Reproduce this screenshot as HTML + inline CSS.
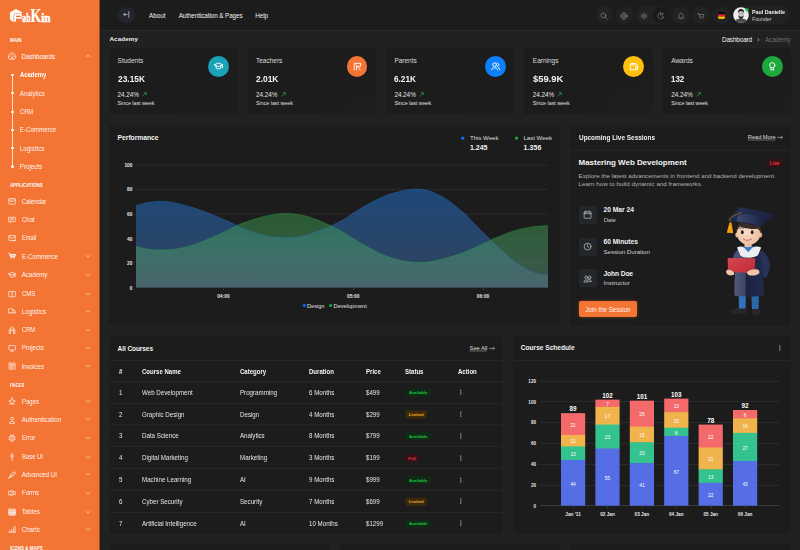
<!DOCTYPE html>
<html><head><meta charset="utf-8"><title>FabKin</title>
<style>
html,body{margin:0;padding:0;}
html{background:#212121;overflow:hidden;width:800px;height:550px;}
body{width:800px;height:550px;overflow:hidden;background:#212121;font-family:"Liberation Sans",sans-serif;position:relative;}
.t{position:absolute;white-space:nowrap;margin:0;padding:0;}
.b{position:absolute;box-sizing:border-box;}
svg{position:absolute;overflow:visible;}
.u{text-decoration:underline;text-decoration-thickness:0.5px;text-underline-offset:1px;}
</style></head><body>
<svg style="left:0;top:0" width="800" height="550" viewBox="0 0 800 550"><rect x="109.20" y="48.00" width="128.30" height="66.60" rx="3" fill="#1c1c1c"/><rect x="247.60" y="48.00" width="128.30" height="66.60" rx="3" fill="#1c1c1c"/><rect x="386.00" y="48.00" width="128.30" height="66.60" rx="3" fill="#1c1c1c"/><rect x="524.40" y="48.00" width="128.30" height="66.60" rx="3" fill="#1c1c1c"/><rect x="662.80" y="48.00" width="128.30" height="66.60" rx="3" fill="#1c1c1c"/><rect x="109.20" y="125.00" width="450.80" height="199.60" rx="3" fill="#1c1c1c"/><rect x="570.20" y="125.00" width="220.60" height="200.60" rx="3" fill="#1c1c1c"/><rect x="109.20" y="336.00" width="392.90" height="197.40" rx="3" fill="#1c1c1c"/><rect x="405.50" y="388.70" width="25.40" height="8.00" rx="1.8" fill="#0f2b15"/><rect x="405.50" y="410.53" width="21.40" height="8.00" rx="1.8" fill="#3a2a0c"/><rect x="405.50" y="432.36" width="25.40" height="8.00" rx="1.8" fill="#0f2b15"/><rect x="405.50" y="454.19" width="13.20" height="8.00" rx="1.8" fill="#3a1216"/><rect x="405.50" y="476.02" width="25.40" height="8.00" rx="1.8" fill="#0f2b15"/><rect x="405.50" y="497.85" width="21.40" height="8.00" rx="1.8" fill="#3a2a0c"/><rect x="405.50" y="519.68" width="25.40" height="8.00" rx="1.8" fill="#0f2b15"/><rect x="513.00" y="336.00" width="277.80" height="197.20" rx="3" fill="#1c1c1c"/><rect x="109.20" y="544.00" width="220.50" height="10.00" rx="3" fill="#1c1c1c"/><rect x="339.80" y="544.00" width="220.50" height="10.00" rx="3" fill="#1c1c1c"/><rect x="570.30" y="544.00" width="220.50" height="10.00" rx="3" fill="#1c1c1c"/></svg>
<div class="b" style="left:99.00px;top:0.00px;width:701.00px;height:31.00px;background:#1c1c1c;border-radius:0px;border-bottom:1px solid #292929;"></div>
<svg style="left:0;top:0" width="102" height="550" viewBox="0 0 102 550"><rect x="99" y="0" width="2.1" height="550" fill="#1c1e20"/><rect x="0" y="0" width="99.55" height="550" fill="#f37433"/></svg>
<svg style="left:0;top:0" width="60" height="30" viewBox="0 0 60 30">
<path d="M9.95 12.6 L16 9.0 L21.8 11.9 L21.8 21.6 L12.8 21.7 L9.95 19.5 Z" fill="#fff"/>
<path d="M21.9 13.4 L15.6 13.4 Q13.8 13.4 13.8 15.2 L13.8 21.8" fill="none" stroke="#f37433" stroke-width="0.55"/>
<rect x="16" y="15.7" width="4.6" height="1.4" fill="#f37433"/>
<path d="M16 18.7 L21.9 18.7 L21.9 21.8 L16 21.8 Z" fill="#f37433"/>
<g fill="#fff" font-family="Liberation Serif, serif" font-weight="700">
<text transform="translate(22.3,21.7) scale(1,1.4)" font-size="9" stroke="#fff" stroke-width="0.4" textLength="8.2" lengthAdjust="spacingAndGlyphs">ab</text>
<text transform="translate(30.4,21.7) scale(1,1.37)" font-size="13" stroke="#fff" stroke-width="0.15" textLength="10.8" lengthAdjust="spacingAndGlyphs">K</text>
<text transform="translate(41.2,21.7) scale(1,1.4)" font-size="9" stroke="#fff" stroke-width="0.4" textLength="9.3" lengthAdjust="spacingAndGlyphs">in</text>
</g></svg>
<span class="t " style="left:9.90px;top:37px;font-size:4.5px;line-height:7px;color:#fff;font-weight:700;letter-spacing:0.050px;">MAIN</span>
<span class="t " style="left:9.90px;top:182px;font-size:4.5px;line-height:7px;color:#fff;font-weight:700;letter-spacing:-0.031px;">APPLICATIONS</span>
<span class="t " style="left:9.90px;top:382px;font-size:4.5px;line-height:7px;color:#fff;font-weight:700;transform-origin:0 50%;transform:scaleX(0.9273);">PAGES</span>
<span class="t " style="left:9.90px;top:545px;font-size:4.5px;line-height:7px;color:#fff;font-weight:700;letter-spacing:-0.017px;">ICONS &amp; MAPS</span>
<svg style="left:7.6px;top:52.20px" width="8.2" height="8.2" viewBox="0 0 8 8" fill="none" stroke="#fff" stroke-width="0.66" stroke-linecap="round" stroke-linejoin="round" opacity="0.95"><path d="M0.5 5.2 C0.4 2.6 2 0.9 4 0.9 C6 0.9 7.6 2.6 7.5 5.2 C7.5 6.4 6.8 7 5.8 7 H2.2 C1.2 7 0.5 6.4 0.5 5.2 Z M2.6 7 C2.6 5.4 5.4 5.4 5.4 7 M4 5.6 L5.2 3.4 M1.9 4.6 h0.1 M2.6 3 h0.1 M4 2.3 h0.1 M6.1 4.6 h0.1"/></svg>
<span class="t " style="left:21.60px;top:52px;font-size:6.3px;line-height:9px;color:#fff;letter-spacing:-0.057px;">Dashboards</span>
<svg style="left:85.8px;top:55.4px" width="4" height="2.4" viewBox="0 0 4 2.4"><path d="M0 2.2 L2 0.2 L4 2.2" fill="none" stroke="#fff" stroke-width="0.7" opacity="0.85"/></svg>
<div class="b" style="left:12.30px;top:75.00px;width:0.50px;height:91.50px;background:rgba(255,255,255,.75);border-radius:0px;"></div>
<div class="b" style="left:11.45px;top:74.10px;width:2.20px;height:2.20px;background:#fff;border-radius:2px;"></div>
<span class="t " style="left:19.80px;top:70px;font-size:6.3px;line-height:9px;color:#fff;font-weight:700;transform-origin:0 50%;transform:scaleX(0.9352);">Academy</span>
<div class="b" style="left:11.45px;top:92.30px;width:2.20px;height:2.20px;background:#fff;border-radius:2px;"></div>
<span class="t " style="left:19.80px;top:89px;font-size:6.3px;line-height:9px;color:rgba(255,255,255,.95);letter-spacing:-0.001px;">Analytics</span>
<div class="b" style="left:11.45px;top:110.50px;width:2.20px;height:2.20px;background:#fff;border-radius:2px;"></div>
<span class="t " style="left:19.80px;top:107px;font-size:6.3px;line-height:9px;color:rgba(255,255,255,.95);transform-origin:0 50%;transform:scaleX(0.9200);">CRM</span>
<div class="b" style="left:11.45px;top:128.80px;width:2.20px;height:2.20px;background:#fff;border-radius:2px;"></div>
<span class="t " style="left:19.80px;top:125px;font-size:6.3px;line-height:9px;color:rgba(255,255,255,.95);letter-spacing:-0.071px;">E-Commerce</span>
<div class="b" style="left:11.45px;top:147.20px;width:2.20px;height:2.20px;background:#fff;border-radius:2px;"></div>
<span class="t " style="left:19.80px;top:144px;font-size:6.3px;line-height:9px;color:rgba(255,255,255,.95);letter-spacing:0.021px;">Logistics</span>
<div class="b" style="left:11.45px;top:165.40px;width:2.20px;height:2.20px;background:#fff;border-radius:2px;"></div>
<span class="t " style="left:19.80px;top:162px;font-size:6.3px;line-height:9px;color:rgba(255,255,255,.95);letter-spacing:-0.070px;">Projects</span>
<svg style="left:7.6px;top:197.30px" width="8.2" height="8.2" viewBox="0 0 8 8" fill="none" stroke="#fff" stroke-width="0.66" stroke-linecap="round" stroke-linejoin="round" opacity="0.95"><rect x="0.8" y="1.4" width="6.4" height="5.6" rx="0.8"/><path d="M0.8 3 H7.2 M2.4 4.4 H4.2"/></svg>
<span class="t " style="left:21.70px;top:197px;font-size:6.3px;line-height:9px;color:rgba(255,255,255,.95);letter-spacing:-0.121px;">Calendar</span>
<svg style="left:7.6px;top:215.50px" width="8.2" height="8.2" viewBox="0 0 8 8" fill="none" stroke="#fff" stroke-width="0.66" stroke-linecap="round" stroke-linejoin="round" opacity="0.95"><path d="M0.9 1.2 H7.1 V5.4 H3.6 L2.2 6.9 V5.4 H0.9 Z M2.3 2.7 H5.7 M2.3 3.9 H4.6"/></svg>
<span class="t " style="left:21.70px;top:215px;font-size:6.3px;line-height:9px;color:rgba(255,255,255,.95);transform-origin:0 50%;transform:scaleX(0.9543);">Chat</span>
<svg style="left:7.6px;top:234.00px" width="8.2" height="8.2" viewBox="0 0 8 8" fill="none" stroke="#fff" stroke-width="0.66" stroke-linecap="round" stroke-linejoin="round" opacity="0.95"><rect x="0.8" y="1.6" width="6.4" height="4.8" rx="0.6"/><path d="M0.8 2.2 L4 4.4 L7.2 2.2 M5 6.4 L7.4 6.4"/></svg>
<span class="t " style="left:21.70px;top:233px;font-size:6.3px;line-height:9px;color:rgba(255,255,255,.95);transform-origin:0 50%;transform:scaleX(0.9014);">Email</span>
<svg style="left:7.6px;top:252.30px" width="8.2" height="8.2" viewBox="0 0 8 8" fill="none" stroke="#fff" stroke-width="0.66" stroke-linecap="round" stroke-linejoin="round" opacity="0.95"><path d="M2.2 2.4 H7.2 L6.4 5 H2.8 Z" fill="rgba(255,255,255,.55)"/><path d="M0.6 1.2 H1.8 L2.8 5 H6.4 L7.2 2.4 H2.2 M3.2 6.6 h0.1 M6 6.6 h0.1" stroke-width="0.75"/></svg>
<span class="t " style="left:21.70px;top:252px;font-size:6.3px;line-height:9px;color:rgba(255,255,255,.95);letter-spacing:-0.081px;">E-Commerce</span>
<svg style="left:85.8px;top:255.2px" width="4" height="2.4" viewBox="0 0 4 2.4"><path d="M0 0.2 L2 2.2 L4 0.2" fill="none" stroke="#fff" stroke-width="0.7" opacity="0.8"/></svg>
<svg style="left:7.6px;top:270.60px" width="8.2" height="8.2" viewBox="0 0 8 8" fill="none" stroke="#fff" stroke-width="0.66" stroke-linecap="round" stroke-linejoin="round" opacity="0.95"><path d="M0.6 2.6 L4 1.2 L7.4 2.6 L4 4 Z M2 3.4 V5.4 C3 6.4 5 6.4 6 5.4 V3.4 M7 2.8 V5.6"/></svg>
<span class="t " style="left:21.70px;top:270px;font-size:6.3px;line-height:9px;color:rgba(255,255,255,.95);letter-spacing:-0.095px;">Academy</span>
<svg style="left:85.8px;top:273.5px" width="4" height="2.4" viewBox="0 0 4 2.4"><path d="M0 0.2 L2 2.2 L4 0.2" fill="none" stroke="#fff" stroke-width="0.7" opacity="0.8"/></svg>
<svg style="left:7.6px;top:289.60px" width="8.2" height="8.2" viewBox="0 0 8 8" fill="none" stroke="#fff" stroke-width="0.66" stroke-linecap="round" stroke-linejoin="round" opacity="0.95"><rect x="0.8" y="1.4" width="6.4" height="5.2" rx="0.4"/><path d="M4 1.4 V6.6"/></svg>
<span class="t " style="left:21.70px;top:289px;font-size:6.3px;line-height:9px;color:rgba(255,255,255,.95);transform-origin:0 50%;transform:scaleX(0.9428);">CMS</span>
<svg style="left:85.8px;top:292.5px" width="4" height="2.4" viewBox="0 0 4 2.4"><path d="M0 0.2 L2 2.2 L4 0.2" fill="none" stroke="#fff" stroke-width="0.7" opacity="0.8"/></svg>
<svg style="left:7.6px;top:307.30px" width="8.2" height="8.2" viewBox="0 0 8 8" fill="none" stroke="#fff" stroke-width="0.66" stroke-linecap="round" stroke-linejoin="round" opacity="0.95"><path d="M0.8 1.8 H4.8 V5.6 H0.8 Z M4.8 3 H6.4 L7.3 4.2 V5.6 H4.8 M2.2 6.3 h0.1 M6 6.3 h0.1"/></svg>
<span class="t " style="left:21.70px;top:307px;font-size:6.3px;line-height:9px;color:rgba(255,255,255,.95);letter-spacing:0.010px;">Logistics</span>
<svg style="left:85.8px;top:310.2px" width="4" height="2.4" viewBox="0 0 4 2.4"><path d="M0 0.2 L2 2.2 L4 0.2" fill="none" stroke="#fff" stroke-width="0.7" opacity="0.8"/></svg>
<svg style="left:7.6px;top:325.60px" width="8.2" height="8.2" viewBox="0 0 8 8" fill="none" stroke="#fff" stroke-width="0.66" stroke-linecap="round" stroke-linejoin="round" opacity="0.95"><path d="M1.2 7 V3.4 L2.6 2.2 L2.6 7 Z M5.4 7 V2.2 L6.8 3.4 V7 Z M2.6 4.2 H5.4 M3.2 1 V2 M4.8 1 V2"/></svg>
<span class="t " style="left:21.70px;top:325px;font-size:6.3px;line-height:9px;color:rgba(255,255,255,.95);transform-origin:0 50%;transform:scaleX(0.9200);">CRM</span>
<svg style="left:85.8px;top:328.5px" width="4" height="2.4" viewBox="0 0 4 2.4"><path d="M0 0.2 L2 2.2 L4 0.2" fill="none" stroke="#fff" stroke-width="0.7" opacity="0.8"/></svg>
<svg style="left:7.6px;top:343.90px" width="8.2" height="8.2" viewBox="0 0 8 8" fill="none" stroke="#fff" stroke-width="0.66" stroke-linecap="round" stroke-linejoin="round" opacity="0.95"><rect x="0.8" y="1.4" width="6.4" height="4.4" rx="0.5"/><path d="M2.8 7 H5.2 M4 5.8 V7"/></svg>
<span class="t " style="left:21.70px;top:343px;font-size:6.3px;line-height:9px;color:rgba(255,255,255,.95);letter-spacing:-0.082px;">Projects</span>
<svg style="left:85.8px;top:346.8px" width="4" height="2.4" viewBox="0 0 4 2.4"><path d="M0 0.2 L2 2.2 L4 0.2" fill="none" stroke="#fff" stroke-width="0.7" opacity="0.8"/></svg>
<svg style="left:7.6px;top:362.20px" width="8.2" height="8.2" viewBox="0 0 8 8" fill="none" stroke="#fff" stroke-width="0.66" stroke-linecap="round" stroke-linejoin="round" opacity="0.95"><rect x="1" y="1" width="6" height="6" rx="0.3"/><path d="M2.2 2.4 H5.8 M2.2 3.6 H5.8 M2.2 4.8 H5.8 M2.2 5.9 H4"/></svg>
<span class="t " style="left:21.70px;top:362px;font-size:6.3px;line-height:9px;color:rgba(255,255,255,.95);letter-spacing:-0.101px;">Invoices</span>
<svg style="left:85.8px;top:365.1px" width="4" height="2.4" viewBox="0 0 4 2.4"><path d="M0 0.2 L2 2.2 L4 0.2" fill="none" stroke="#fff" stroke-width="0.7" opacity="0.8"/></svg>
<svg style="left:7.6px;top:397.20px" width="8.2" height="8.2" viewBox="0 0 8 8" fill="none" stroke="#fff" stroke-width="0.66" stroke-linecap="round" stroke-linejoin="round" opacity="0.95"><path d="M4 0.8 L5.2 3.4 L7.2 4 L5.2 4.8 L4 7.2 L2.8 4.8 L0.8 4 L2.8 3.4 Z M1.4 6.8 H6.6"/></svg>
<span class="t " style="left:21.70px;top:397px;font-size:6.3px;line-height:9px;color:rgba(255,255,255,.95);transform-origin:0 50%;transform:scaleX(0.9516);">Pages</span>
<svg style="left:85.8px;top:400.1px" width="4" height="2.4" viewBox="0 0 4 2.4"><path d="M0 0.2 L2 2.2 L4 0.2" fill="none" stroke="#fff" stroke-width="0.7" opacity="0.8"/></svg>
<svg style="left:7.6px;top:415.50px" width="8.2" height="8.2" viewBox="0 0 8 8" fill="none" stroke="#fff" stroke-width="0.66" stroke-linecap="round" stroke-linejoin="round" opacity="0.95"><circle cx="4" cy="2.6" r="1.4"/><path d="M1.4 6.8 C1.4 4.6 6.6 4.6 6.6 6.8 Z"/></svg>
<span class="t " style="left:21.70px;top:415px;font-size:6.3px;line-height:9px;color:rgba(255,255,255,.95);letter-spacing:-0.024px;">Authentication</span>
<svg style="left:85.8px;top:418.40000000000003px" width="4" height="2.4" viewBox="0 0 4 2.4"><path d="M0 0.2 L2 2.2 L4 0.2" fill="none" stroke="#fff" stroke-width="0.7" opacity="0.8"/></svg>
<svg style="left:7.6px;top:433.70px" width="8.2" height="8.2" viewBox="0 0 8 8" fill="none" stroke="#fff" stroke-width="0.66" stroke-linecap="round" stroke-linejoin="round" opacity="0.95"><rect x="2" y="1.6" width="4" height="5.2" rx="1.4"/><path d="M0.9 3 H2 M6 3 H7.1 M0.9 5.2 H2 M6 5.2 H7.1 M4 1.6 V6.8 M2.8 0.8 L3.3 1.6 M5.2 0.8 L4.7 1.6"/></svg>
<span class="t " style="left:21.70px;top:433px;font-size:6.3px;line-height:9px;color:rgba(255,255,255,.95);transform-origin:0 50%;transform:scaleX(0.9428);">Error</span>
<svg style="left:85.8px;top:436.6px" width="4" height="2.4" viewBox="0 0 4 2.4"><path d="M0 0.2 L2 2.2 L4 0.2" fill="none" stroke="#fff" stroke-width="0.7" opacity="0.8"/></svg>
<svg style="left:7.6px;top:452.60px" width="8.2" height="8.2" viewBox="0 0 8 8" fill="none" stroke="#fff" stroke-width="0.66" stroke-linecap="round" stroke-linejoin="round" opacity="0.95"><path d="M4 0.8 C5.6 2 5.6 4 4 5 C2.4 4 2.4 2 4 0.8 Z M4 2.4 V7.4"/></svg>
<span class="t " style="left:21.70px;top:452px;font-size:6.3px;line-height:9px;color:rgba(255,255,255,.95);transform-origin:0 50%;transform:scaleX(0.9371);">Base UI</span>
<svg style="left:85.8px;top:455.5px" width="4" height="2.4" viewBox="0 0 4 2.4"><path d="M0 0.2 L2 2.2 L4 0.2" fill="none" stroke="#fff" stroke-width="0.7" opacity="0.8"/></svg>
<svg style="left:7.6px;top:470.50px" width="8.2" height="8.2" viewBox="0 0 8 8" fill="none" stroke="#fff" stroke-width="0.66" stroke-linecap="round" stroke-linejoin="round" opacity="0.95"><path d="M0.8 7.2 C1.6 3.4 4.2 1.4 7.2 0.9 C6.8 3.8 4.8 6 1.8 6.2 M0.8 7.2 L4.6 3.4"/></svg>
<span class="t " style="left:21.70px;top:470px;font-size:6.3px;line-height:9px;color:rgba(255,255,255,.95);letter-spacing:-0.070px;">Advanced UI</span>
<svg style="left:85.8px;top:473.40000000000003px" width="4" height="2.4" viewBox="0 0 4 2.4"><path d="M0 0.2 L2 2.2 L4 0.2" fill="none" stroke="#fff" stroke-width="0.7" opacity="0.8"/></svg>
<svg style="left:7.6px;top:488.80px" width="8.2" height="8.2" viewBox="0 0 8 8" fill="none" stroke="#fff" stroke-width="0.66" stroke-linecap="round" stroke-linejoin="round" opacity="0.95"><path d="M0.8 2.2 H3 V5.8 H0.8 Z M3 1.4 C4.4 1.4 5 1.8 5 2.6 V5.4 C5 6.2 4.4 6.6 3 6.6 M5 2.6 H7.2 V5.4 H5"/></svg>
<span class="t " style="left:21.70px;top:488px;font-size:6.3px;line-height:9px;color:rgba(255,255,255,.95);transform-origin:0 50%;transform:scaleX(0.9525);">Forms</span>
<svg style="left:85.8px;top:491.7px" width="4" height="2.4" viewBox="0 0 4 2.4"><path d="M0 0.2 L2 2.2 L4 0.2" fill="none" stroke="#fff" stroke-width="0.7" opacity="0.8"/></svg>
<svg style="left:7.6px;top:507.70px" width="8.2" height="8.2" viewBox="0 0 8 8" fill="none" stroke="#fff" stroke-width="0.66" stroke-linecap="round" stroke-linejoin="round" opacity="0.95"><rect x="0.8" y="1" width="6.4" height="6" rx="0.4" fill="rgba(255,255,255,.35)"/><path d="M0.8 2.8 H7.2 M0.8 4.4 H7.2 M0.8 5.8 H7.2 M3 2.8 V7 M5.2 2.8 V7"/></svg>
<span class="t " style="left:21.70px;top:507px;font-size:6.3px;line-height:9px;color:rgba(255,255,255,.95);letter-spacing:-0.002px;">Tables</span>
<svg style="left:85.8px;top:510.6px" width="4" height="2.4" viewBox="0 0 4 2.4"><path d="M0 0.2 L2 2.2 L4 0.2" fill="none" stroke="#fff" stroke-width="0.7" opacity="0.8"/></svg>
<svg style="left:7.6px;top:525.30px" width="8.2" height="8.2" viewBox="0 0 8 8" fill="none" stroke="#fff" stroke-width="0.66" stroke-linecap="round" stroke-linejoin="round" opacity="0.95"><path d="M1 7 H7.2 M1.8 7 V5.4 M3.6 7 V4.2 M5.4 7 V2.6 M7 7 V1.2"/></svg>
<span class="t " style="left:21.70px;top:525px;font-size:6.3px;line-height:9px;color:rgba(255,255,255,.95);letter-spacing:-0.059px;">Charts</span>
<svg style="left:85.8px;top:528.1999999999999px" width="4" height="2.4" viewBox="0 0 4 2.4"><path d="M0 0.2 L2 2.2 L4 0.2" fill="none" stroke="#fff" stroke-width="0.7" opacity="0.8"/></svg>
<div class="b" style="left:118.30px;top:6.80px;width:16.40px;height:16.40px;background:#23272d;border-radius:9px;"></div>
<svg style="left:123px;top:11.4px" width="7" height="7" viewBox="0 0 7 7" fill="none" stroke="#d4d9e2" stroke-width="0.7"><path d="M0.7 3.5 H4.4 M2.2 2 L0.7 3.5 L2.2 5 M5.8 0.2 V6.8"/></svg>
<span class="t " style="left:149.00px;top:11px;font-size:6.3px;line-height:9px;color:#f2f2f2;letter-spacing:0.027px;">About</span>
<span class="t " style="left:178.70px;top:11px;font-size:6.3px;line-height:9px;color:#f2f2f2;letter-spacing:-0.073px;">Authentication &amp; Pages</span>
<span class="t " style="left:255.30px;top:11px;font-size:6.3px;line-height:9px;color:#f2f2f2;letter-spacing:-0.064px;">Help</span>
<div class="b" style="left:595.60px;top:6.20px;width:17.60px;height:17.60px;background:#222222;border-radius:9px;"></div>
<div class="b" style="left:615.60px;top:6.20px;width:17.60px;height:17.60px;background:#222222;border-radius:9px;"></div>
<div class="b" style="left:672.20px;top:6.20px;width:17.60px;height:17.60px;background:#222222;border-radius:9px;"></div>
<div class="b" style="left:692.20px;top:6.20px;width:17.60px;height:17.60px;background:#222222;border-radius:9px;"></div>
<div class="b" style="left:712.40px;top:6.20px;width:17.60px;height:17.60px;background:#222222;border-radius:9px;"></div>
<div class="b" style="left:635.50px;top:6.20px;width:34.70px;height:17.60px;background:#222222;border-radius:9px;"></div>
<div class="b" style="left:653.40px;top:7.00px;width:16.00px;height:16.00px;background:#1a1a1a;border-radius:9px;"></div>
<svg style="left:600.4px;top:11.5px" width="8" height="8" viewBox="0 0 8 8" fill="none" stroke="#9c9c9c" stroke-width="0.55" stroke-linecap="round" stroke-linejoin="round"><circle cx="3.4" cy="3.4" r="2.4"/><path d="M5.2 5.2 L7.2 7.2"/></svg>
<svg style="left:620.4px;top:11.5px" width="8" height="8" viewBox="0 0 8 8" fill="none" stroke="#9c9c9c" stroke-width="0.55" stroke-linecap="round" stroke-linejoin="round"><circle cx="4" cy="4" r="2.9"/><circle cx="4" cy="4" r="1.2"/><path d="M4 0.6 V1.4 M4 6.6 V7.4 M0.6 4 H1.4 M6.6 4 H7.4"/></svg>
<svg style="left:640.3px;top:11.5px" width="8" height="8" viewBox="0 0 8 8" fill="none" stroke="#9c9c9c" stroke-width="0.55" stroke-linecap="round" stroke-linejoin="round"><circle cx="4" cy="4" r="1.5"/><path d="M4 0.7 V1.5 M4 6.5 V7.3 M0.7 4 H1.5 M6.5 4 H7.3 M1.7 1.7 L2.2 2.2 M5.8 5.8 L6.3 6.3 M1.7 6.3 L2.2 5.8 M5.8 2.2 L6.3 1.7"/></svg>
<svg style="left:657.4px;top:11.5px" width="8" height="8" viewBox="0 0 8 8" fill="none" stroke="#9c9c9c" stroke-width="0.55" stroke-linecap="round" stroke-linejoin="round"><path d="M3.4 1 C1.6 1.4 0.8 3 1 4.4 C1.3 6.2 3 7.2 4.6 7 C5.8 6.8 6.6 6 7 5 C5.6 5.4 3.6 4.6 3.4 1 Z M5.6 1.2 V2.6 M4.9 1.9 H6.3"/></svg>
<svg style="left:677px;top:11.5px" width="8" height="8" viewBox="0 0 8 8" fill="none" stroke="#9c9c9c" stroke-width="0.55" stroke-linecap="round" stroke-linejoin="round"><path d="M1.6 5.8 C2.2 5 2 3.8 2.2 2.8 C2.4 1.8 3.2 1.1 4 1.1 C4.8 1.1 5.6 1.8 5.8 2.8 C6 3.8 5.8 5 6.4 5.8 Z M3.3 6.8 C3.6 7.3 4.4 7.3 4.7 6.8"/></svg>
<svg style="left:697px;top:11.5px" width="8" height="8" viewBox="0 0 8 8" fill="none" stroke="#9c9c9c" stroke-width="0.55" stroke-linecap="round" stroke-linejoin="round"><path d="M0.8 1.3 H1.9 L2.8 5.2 H6.2 L7 2.5 H2.2 M3.3 6.6 h0.1 M5.8 6.6 h0.1"/></svg>
<svg style="left:717.8px;top:12.3px" width="7" height="6.9" viewBox="0 0 7 6.9"><defs><clipPath id="fl"><rect width="7" height="6.9" rx="1.6"/></clipPath></defs><g clip-path="url(#fl)"><rect width="7" height="2.3" fill="#0c0c0c"/><rect y="2.3" width="7" height="2.3" fill="#e0202a"/><rect y="4.6" width="7" height="2.3" fill="#f9c500"/></g></svg>
<div class="b" style="left:732.60px;top:5.60px;width:57.20px;height:18.80px;background:#222222;border-radius:10px;"></div>
<svg style="left:733.4px;top:7px" width="16" height="16" viewBox="0 0 17 17">
<defs><clipPath id="av"><circle cx="8.5" cy="8.5" r="8.3"/></clipPath></defs>
<circle cx="8.5" cy="8.5" r="8.3" fill="#ececec"/>
<g clip-path="url(#av)">
<path d="M1.2 17 C1.8 13.6 4.6 12.6 8.5 12.6 C12.4 12.6 15.2 13.6 15.8 17 Z" fill="#4a4a4a"/>
<path d="M5.4 6.8 C5.4 4 6.6 3 8.5 3 C10.4 3 11.6 4 11.6 6.8 C11.6 10 10.4 12.6 8.5 12.6 C6.6 12.6 5.4 10 5.4 6.8 Z" fill="#c9c9c9"/>
<path d="M5.2 6.6 C4.8 3.4 6.4 2 8.5 2 C10.6 2 12.2 3.4 11.8 6.6 C11.2 5 10.4 4.6 8.5 4.6 C6.6 4.6 5.8 5 5.2 6.6 Z" fill="#222"/>
<path d="M5.5 8.4 C5.8 11.4 6.9 12.9 8.5 12.9 C10.1 12.9 11.2 11.4 11.5 8.4 C10.8 9.8 10 10 8.5 10 C7 10 6.2 9.8 5.5 8.4 Z" fill="#333"/>
<path d="M6.6 7 h1.2 M9.2 7 h1.2" stroke="#333" stroke-width="0.6"/>
</g>
<circle cx="14.9" cy="3" r="1.75" fill="#1fc244"/>
</svg>
<span class="t " style="left:752.00px;top:8px;font-size:5.9px;line-height:8px;color:#f2f2f2;font-weight:700;transform-origin:0 50%;transform:scaleX(0.8986);">Paul Danielle</span>
<span class="t " style="left:752.00px;top:15px;font-size:5.3px;line-height:8px;color:#c8c8c8;letter-spacing:-0.049px;">Founder</span>
<span class="t " style="left:109.40px;top:34px;font-size:6.2px;line-height:9px;color:#f0f0f0;font-weight:700;letter-spacing:0.176px;">Academy</span>
<span class="t " style="left:722.00px;top:35px;font-size:6.3px;line-height:9px;color:#f4f4f4;letter-spacing:-0.091px;">Dashboard</span>
<svg style="left:757px;top:38.4px" width="3" height="3.4" viewBox="0 0 3 3.4"><path d="M0.6 0.3 L2.2 1.7 L0.6 3.1" fill="none" stroke="#b0b0b0" stroke-width="0.75"/></svg>
<span class="t " style="left:765.00px;top:35px;font-size:6.3px;line-height:9px;color:#6e6e6e;letter-spacing:-0.109px;">Academy</span>
<svg width="0" height="0" style="left:0;top:0"><defs><pattern id="dots0" width="3.8" height="3.8" patternUnits="userSpaceOnUse" patternTransform="rotate(25)"><circle cx="1.9" cy="1.9" r="0.75" fill="#1aa2b8"/></pattern><pattern id="dots1" width="3.8" height="3.8" patternUnits="userSpaceOnUse" patternTransform="rotate(25)"><circle cx="1.9" cy="1.9" r="0.75" fill="#f37433"/></pattern><pattern id="dots2" width="3.8" height="3.8" patternUnits="userSpaceOnUse" patternTransform="rotate(25)"><circle cx="1.9" cy="1.9" r="0.75" fill="#0d7df7"/></pattern><pattern id="dots3" width="3.8" height="3.8" patternUnits="userSpaceOnUse" patternTransform="rotate(25)"><circle cx="1.9" cy="1.9" r="0.75" fill="#f7c31d"/></pattern><pattern id="dots4" width="3.8" height="3.8" patternUnits="userSpaceOnUse" patternTransform="rotate(25)"><circle cx="1.9" cy="1.9" r="0.75" fill="#24a63f"/></pattern>
<radialGradient id="dfade" cx="1" cy="1" r="1.05"><stop offset="0" stop-color="#fff" stop-opacity="1"/><stop offset="0.5" stop-color="#fff" stop-opacity=".6"/><stop offset="1" stop-color="#fff" stop-opacity="0"/></radialGradient>
<mask id="dmask" maskContentUnits="objectBoundingBox"><rect width="1" height="1" fill="url(#dfade)"/></mask>
</defs></svg>
<svg style="left:159.00px;top:62px;overflow:hidden" width="78.4" height="52.6" viewBox="0 0 78.4 52.6" opacity="0.13"><g mask="url(#dmask)"><rect width="78.4" height="52.6" fill="url(#dots0)"/></g></svg>
<span class="t " style="left:117.60px;top:56px;font-size:6.5px;line-height:9px;color:#dcdcdc;">Students</span>
<span class="t " style="left:117.60px;top:72px;font-size:9.8px;line-height:13px;color:#f4f4f4;font-weight:700;transform-origin:0 50%;transform:scaleX(0.8544);">23.15K</span>
<span class="t " style="left:117.60px;top:90px;font-size:6.4px;line-height:9px;color:#e2e2e2;letter-spacing:-0.051px;">24.24%</span>
<svg style="left:142.20px;top:92.3px" width="5" height="5" viewBox="0 0 5 5" fill="none" stroke="#27b14a" stroke-width="0.65"><path d="M0.6 4.4 L4.3 0.7 M1.8 0.7 H4.3 V3.2"/></svg>
<span class="t " style="left:117.60px;top:99px;font-size:5.3px;line-height:8px;color:#e0e0e0;letter-spacing:-0.002px;">Since last week</span>
<div class="b" style="left:208.20px;top:56.00px;width:20.80px;height:20.80px;background:#1aa2b8;border-radius:11px;"></div>
<svg style="left:213.10px;top:60.90px" width="11" height="11" viewBox="0 0 10 10" fill="none" stroke="#fff" stroke-width="0.85" stroke-linecap="round" stroke-linejoin="round"><path d="M1.2 3.4 L5 1.8 L8.8 3.4 L5 5 Z M2.8 4.3 V6.4 C3.8 7.4 6.2 7.4 7.2 6.4 V4.3 M8.6 3.6 V6"/></svg>
<svg style="left:297.40px;top:62px;overflow:hidden" width="78.4" height="52.6" viewBox="0 0 78.4 52.6" opacity="0.14"><g mask="url(#dmask)"><rect width="78.4" height="52.6" fill="url(#dots1)"/></g></svg>
<span class="t " style="left:256.00px;top:56px;font-size:6.5px;line-height:9px;color:#dcdcdc;">Teachers</span>
<span class="t " style="left:256.00px;top:72px;font-size:9.8px;line-height:13px;color:#f4f4f4;font-weight:700;transform-origin:0 50%;transform:scaleX(0.8565);">2.01K</span>
<span class="t " style="left:256.00px;top:90px;font-size:6.4px;line-height:9px;color:#e2e2e2;letter-spacing:-0.051px;">24.24%</span>
<svg style="left:280.60px;top:92.3px" width="5" height="5" viewBox="0 0 5 5" fill="none" stroke="#27b14a" stroke-width="0.65"><path d="M0.6 4.4 L4.3 0.7 M1.8 0.7 H4.3 V3.2"/></svg>
<span class="t " style="left:256.00px;top:99px;font-size:5.3px;line-height:8px;color:#e0e0e0;letter-spacing:-0.002px;">Since last week</span>
<div class="b" style="left:346.60px;top:56.00px;width:20.80px;height:20.80px;background:#f37433;border-radius:11px;"></div>
<svg style="left:351.50px;top:60.90px" width="11" height="11" viewBox="0 0 10 10" fill="none" stroke="#fff" stroke-width="0.85" stroke-linecap="round" stroke-linejoin="round"><path d="M2.1 8.1 V2.1 H7.8 V4.8 H3.9 M4.1 4.8 V8.1 M5.5 5.3 L7.4 8.1 M3.7 3.5 h0.1"/></svg>
<svg style="left:435.80px;top:62px;overflow:hidden" width="78.4" height="52.6" viewBox="0 0 78.4 52.6" opacity="0.13"><g mask="url(#dmask)"><rect width="78.4" height="52.6" fill="url(#dots2)"/></g></svg>
<span class="t " style="left:394.40px;top:56px;font-size:6.5px;line-height:9px;color:#dcdcdc;">Parents</span>
<span class="t " style="left:394.40px;top:72px;font-size:9.8px;line-height:13px;color:#f4f4f4;font-weight:700;transform-origin:0 50%;transform:scaleX(0.8374);">6.21K</span>
<span class="t " style="left:394.40px;top:90px;font-size:6.4px;line-height:9px;color:#e2e2e2;letter-spacing:-0.051px;">24.24%</span>
<svg style="left:419.00px;top:92.3px" width="5" height="5" viewBox="0 0 5 5" fill="none" stroke="#27b14a" stroke-width="0.65"><path d="M0.6 4.4 L4.3 0.7 M1.8 0.7 H4.3 V3.2"/></svg>
<span class="t " style="left:394.40px;top:99px;font-size:5.3px;line-height:8px;color:#e0e0e0;letter-spacing:-0.002px;">Since last week</span>
<div class="b" style="left:485.00px;top:56.00px;width:20.80px;height:20.80px;background:#0c81fb;border-radius:11px;"></div>
<svg style="left:489.90px;top:60.90px" width="11" height="11" viewBox="0 0 10 10" fill="none" stroke="#fff" stroke-width="0.85" stroke-linecap="round" stroke-linejoin="round"><circle cx="4.2" cy="3.4" r="1.7"/><path d="M1.4 8 C1.4 5.6 7 5.6 7 8 M6.4 2 C7.6 2 8.2 3 8 4 C7.8 4.8 7.2 5.2 6.6 5.2 M7.6 6 C8.4 6.4 8.8 7.2 8.8 8"/></svg>
<svg style="left:574.20px;top:62px;overflow:hidden" width="78.4" height="52.6" viewBox="0 0 78.4 52.6" opacity="0.14"><g mask="url(#dmask)"><rect width="78.4" height="52.6" fill="url(#dots3)"/></g></svg>
<span class="t " style="left:532.80px;top:56px;font-size:6.5px;line-height:9px;color:#dcdcdc;">Earnings</span>
<span class="t " style="left:532.80px;top:72px;font-size:9.8px;line-height:13px;color:#f4f4f4;font-weight:700;transform-origin:0 50%;transform:scaleX(0.9556);">$59.9K</span>
<span class="t " style="left:532.80px;top:90px;font-size:6.4px;line-height:9px;color:#e2e2e2;letter-spacing:-0.051px;">24.24%</span>
<svg style="left:557.40px;top:92.3px" width="5" height="5" viewBox="0 0 5 5" fill="none" stroke="#27b14a" stroke-width="0.65"><path d="M0.6 4.4 L4.3 0.7 M1.8 0.7 H4.3 V3.2"/></svg>
<span class="t " style="left:532.80px;top:99px;font-size:5.3px;line-height:8px;color:#e0e0e0;letter-spacing:-0.002px;">Since last week</span>
<div class="b" style="left:623.40px;top:56.00px;width:20.80px;height:20.80px;background:#fdc10c;border-radius:11px;"></div>
<svg style="left:628.30px;top:60.90px" width="11" height="11" viewBox="0 0 10 10" fill="none" stroke="#fff" stroke-width="0.85" stroke-linecap="round" stroke-linejoin="round"><path d="M2.5 2.3 H6.9 L8.5 3.7 V8 H2.5 Z M2.5 3.5 H6.8 M8.5 5.1 H6.8 V6.6 H8.5"/></svg>
<svg style="left:712.60px;top:62px;overflow:hidden" width="78.4" height="52.6" viewBox="0 0 78.4 52.6" opacity="0.13"><g mask="url(#dmask)"><rect width="78.4" height="52.6" fill="url(#dots4)"/></g></svg>
<span class="t " style="left:671.20px;top:56px;font-size:6.5px;line-height:9px;color:#dcdcdc;">Awards</span>
<span class="t " style="left:671.20px;top:72px;font-size:9.8px;line-height:13px;color:#f4f4f4;font-weight:700;transform-origin:0 50%;transform:scaleX(0.8073);">132</span>
<span class="t " style="left:671.20px;top:90px;font-size:6.4px;line-height:9px;color:#e2e2e2;letter-spacing:-0.051px;">24.24%</span>
<svg style="left:695.80px;top:92.3px" width="5" height="5" viewBox="0 0 5 5" fill="none" stroke="#27b14a" stroke-width="0.65"><path d="M0.6 4.4 L4.3 0.7 M1.8 0.7 H4.3 V3.2"/></svg>
<span class="t " style="left:671.20px;top:99px;font-size:5.3px;line-height:8px;color:#e0e0e0;letter-spacing:-0.002px;">Since last week</span>
<div class="b" style="left:761.80px;top:56.00px;width:20.80px;height:20.80px;background:#1fa83c;border-radius:11px;"></div>
<svg style="left:766.70px;top:60.90px" width="11" height="11" viewBox="0 0 10 10" fill="none" stroke="#fff" stroke-width="0.85" stroke-linecap="round" stroke-linejoin="round"><circle cx="4.8" cy="3.8" r="2.35"/><path d="M3.6 6 V8.5 L4.8 7.7 L6 8.5 V6"/></svg>
<span class="t " style="left:117.60px;top:133px;font-size:6.8px;line-height:9px;color:#f2f2f2;font-weight:700;letter-spacing:-0.052px;">Performance</span>
<svg style="left:0;top:0" width="800" height="550" viewBox="0 0 800 550"><circle cx="462.8" cy="138.1" r="1.7" fill="#0d6efd"/><circle cx="516.6" cy="138.1" r="1.7" fill="#1fa83c"/><circle cx="304.4" cy="305.6" r="1.5" fill="#0d6efd"/><circle cx="330.6" cy="305.6" r="1.5" fill="#1fa83c"/></svg>
<span class="t " style="left:470.00px;top:133px;font-size:6.1px;line-height:9px;color:#dcdcdc;letter-spacing:-0.022px;">This Week</span>
<span class="t " style="left:470.00px;top:143px;font-size:7px;line-height:9px;color:#f2f2f2;font-weight:700;letter-spacing:-0.003px;">1.245</span>
<span class="t " style="left:523.50px;top:133px;font-size:6.1px;line-height:9px;color:#dcdcdc;letter-spacing:-0.023px;">Last Week</span>
<span class="t " style="left:523.50px;top:143px;font-size:7px;line-height:9px;color:#f2f2f2;font-weight:700;letter-spacing:0.097px;">1.356</span>
<span class="t " style="right:667.60px;top:162px;font-size:4.8px;line-height:7px;color:#e8e8e8;font-weight:700;">100</span>
<span class="t " style="right:667.60px;top:186px;font-size:4.8px;line-height:7px;color:#e8e8e8;font-weight:700;">80</span>
<span class="t " style="right:667.60px;top:211px;font-size:4.8px;line-height:7px;color:#e8e8e8;font-weight:700;">60</span>
<span class="t " style="right:667.60px;top:236px;font-size:4.8px;line-height:7px;color:#e8e8e8;font-weight:700;">40</span>
<span class="t " style="right:667.60px;top:260px;font-size:4.8px;line-height:7px;color:#e8e8e8;font-weight:700;">20</span>
<span class="t " style="right:667.60px;top:285px;font-size:4.8px;line-height:7px;color:#e8e8e8;font-weight:700;">0</span>
<svg style="left:0;top:0" width="800" height="550" viewBox="0 0 800 550">
<defs>
<linearGradient id="gb" x1="0" y1="189" x2="0" y2="287.6" gradientUnits="userSpaceOnUse">
<stop offset="0" stop-color="rgb(30,101,180)" stop-opacity="0.6"/><stop offset="1" stop-color="rgb(64,92,136)" stop-opacity="0.6"/></linearGradient>
<linearGradient id="gg" x1="0" y1="213.6" x2="0" y2="287.6" gradientUnits="userSpaceOnUse">
<stop offset="0" stop-color="rgb(56,152,70)" stop-opacity="0.5"/><stop offset="0.5" stop-color="rgb(76,156,104)" stop-opacity="0.5"/><stop offset="1" stop-color="rgb(96,134,122)" stop-opacity="0.5"/></linearGradient>
</defs>
<rect x="136" y="164.50" width="412" height="1" fill="#2a2a2a"/><rect x="136" y="189.00" width="412" height="1" fill="#2a2a2a"/><rect x="136" y="213.55" width="412" height="1" fill="#2a2a2a"/><rect x="136" y="238.10" width="412" height="1" fill="#2a2a2a"/><rect x="136" y="262.60" width="412" height="1" fill="#2a2a2a"/><rect x="136" y="287.10" width="412" height="1" fill="#2a2a2a"/>
<path d="M136.00 205.70 C137.83 205.18 143.08 203.33 147.00 202.60 C150.92 201.87 155.67 201.42 159.50 201.30 C163.33 201.18 166.73 201.50 170.00 201.90 C173.27 202.30 174.85 202.63 179.10 203.70 C183.35 204.77 190.03 206.52 195.50 208.30 C200.97 210.08 206.45 212.23 211.90 214.40 C217.35 216.57 223.98 219.45 228.20 221.30 C232.42 223.15 235.23 224.52 237.20 225.50 C239.17 226.48 236.80 225.92 240.00 227.20 C243.20 228.48 250.95 231.60 256.40 233.20 C261.85 234.80 267.38 236.03 272.70 236.80 C278.02 237.57 282.83 238.05 288.30 237.80 C293.77 237.55 299.90 236.67 305.50 235.30 C311.10 233.93 317.67 231.18 321.90 229.60 C326.13 228.02 326.82 227.73 330.90 225.80 C334.98 223.87 343.22 219.77 346.40 218.00 C349.58 216.23 346.67 217.37 350.00 215.20 C353.33 213.03 360.95 208.05 366.40 205.00 C371.85 201.95 377.25 199.15 382.70 196.90 C388.15 194.65 393.37 192.82 399.10 191.50 C404.83 190.18 411.63 188.95 417.10 189.00 C422.57 189.05 426.72 189.88 431.90 191.80 C437.08 193.72 442.75 196.87 448.20 200.50 C453.65 204.13 460.97 210.47 464.60 213.60 C468.23 216.73 466.98 216.22 470.00 219.30 C473.02 222.38 479.22 228.62 482.70 232.10 C486.18 235.58 488.17 237.57 490.90 240.20 C493.63 242.83 495.00 244.23 499.10 247.90 C503.20 251.57 510.03 258.23 515.50 262.20 C520.97 266.17 527.82 269.70 531.90 271.70 C535.98 273.70 537.32 273.65 540.00 274.20 C542.68 274.75 546.67 274.87 548.00 275.00 L548 287.6 L136 287.6 Z" fill="url(#gb)"/>
<path d="M136.00 246.30 C137.83 246.75 143.08 248.37 147.00 249.00 C150.92 249.63 155.67 250.00 159.50 250.10 C163.33 250.20 166.73 249.88 170.00 249.60 C173.27 249.32 174.85 249.30 179.10 248.40 C183.35 247.50 190.03 246.00 195.50 244.20 C200.97 242.40 206.45 239.98 211.90 237.60 C217.35 235.22 223.98 231.92 228.20 229.90 C232.42 227.88 235.23 226.45 237.20 225.50 C239.17 224.55 236.80 225.37 240.00 224.20 C243.20 223.03 250.95 220.08 256.40 218.50 C261.85 216.92 267.38 215.52 272.70 214.70 C278.02 213.88 282.83 213.38 288.30 213.60 C293.77 213.82 299.90 214.65 305.50 216.00 C311.10 217.35 317.67 220.07 321.90 221.70 C326.13 223.33 326.82 223.75 330.90 225.80 C334.98 227.85 343.22 232.22 346.40 234.00 C349.58 235.78 346.67 234.45 350.00 236.50 C353.33 238.55 360.95 243.30 366.40 246.30 C371.85 249.30 377.25 252.23 382.70 254.50 C388.15 256.77 393.37 258.58 399.10 259.90 C404.83 261.22 411.63 262.15 417.10 262.40 C422.57 262.65 426.72 262.23 431.90 261.40 C437.08 260.57 442.75 258.97 448.20 257.40 C453.65 255.83 458.85 254.25 464.60 252.00 C470.35 249.75 478.32 245.87 482.70 243.90 C487.08 241.93 488.17 241.43 490.90 240.20 C493.63 238.97 495.00 238.13 499.10 236.50 C503.20 234.87 510.03 231.98 515.50 230.40 C520.97 228.82 527.82 227.72 531.90 227.00 C535.98 226.28 537.32 226.30 540.00 226.10 C542.68 225.90 546.67 225.85 548.00 225.80 L548 287.6 L136 287.6 Z" fill="url(#gg)"/>
<path d="M136.00 205.70 C137.83 205.18 143.08 203.33 147.00 202.60 C150.92 201.87 155.67 201.42 159.50 201.30 C163.33 201.18 166.73 201.50 170.00 201.90 C173.27 202.30 174.85 202.63 179.10 203.70 C183.35 204.77 190.03 206.52 195.50 208.30 C200.97 210.08 206.45 212.23 211.90 214.40 C217.35 216.57 223.98 219.45 228.20 221.30 C232.42 223.15 235.23 224.52 237.20 225.50 C239.17 226.48 236.80 225.92 240.00 227.20 C243.20 228.48 250.95 231.60 256.40 233.20 C261.85 234.80 267.38 236.03 272.70 236.80 C278.02 237.57 282.83 238.05 288.30 237.80 C293.77 237.55 299.90 236.67 305.50 235.30 C311.10 233.93 317.67 231.18 321.90 229.60 C326.13 228.02 326.82 227.73 330.90 225.80 C334.98 223.87 343.22 219.77 346.40 218.00 C349.58 216.23 346.67 217.37 350.00 215.20 C353.33 213.03 360.95 208.05 366.40 205.00 C371.85 201.95 377.25 199.15 382.70 196.90 C388.15 194.65 393.37 192.82 399.10 191.50 C404.83 190.18 411.63 188.95 417.10 189.00 C422.57 189.05 426.72 189.88 431.90 191.80 C437.08 193.72 442.75 196.87 448.20 200.50 C453.65 204.13 460.97 210.47 464.60 213.60 C468.23 216.73 466.98 216.22 470.00 219.30 C473.02 222.38 479.22 228.62 482.70 232.10 C486.18 235.58 488.17 237.57 490.90 240.20 C493.63 242.83 495.00 244.23 499.10 247.90 C503.20 251.57 510.03 258.23 515.50 262.20 C520.97 266.17 527.82 269.70 531.90 271.70 C535.98 273.70 537.32 273.65 540.00 274.20 C542.68 274.75 546.67 274.87 548.00 275.00" fill="none" stroke="#2470c8" stroke-width="0.6" opacity="0.55"/>
<path d="M136.00 246.30 C137.83 246.75 143.08 248.37 147.00 249.00 C150.92 249.63 155.67 250.00 159.50 250.10 C163.33 250.20 166.73 249.88 170.00 249.60 C173.27 249.32 174.85 249.30 179.10 248.40 C183.35 247.50 190.03 246.00 195.50 244.20 C200.97 242.40 206.45 239.98 211.90 237.60 C217.35 235.22 223.98 231.92 228.20 229.90 C232.42 227.88 235.23 226.45 237.20 225.50 C239.17 224.55 236.80 225.37 240.00 224.20 C243.20 223.03 250.95 220.08 256.40 218.50 C261.85 216.92 267.38 215.52 272.70 214.70 C278.02 213.88 282.83 213.38 288.30 213.60 C293.77 213.82 299.90 214.65 305.50 216.00 C311.10 217.35 317.67 220.07 321.90 221.70 C326.13 223.33 326.82 223.75 330.90 225.80 C334.98 227.85 343.22 232.22 346.40 234.00 C349.58 235.78 346.67 234.45 350.00 236.50 C353.33 238.55 360.95 243.30 366.40 246.30 C371.85 249.30 377.25 252.23 382.70 254.50 C388.15 256.77 393.37 258.58 399.10 259.90 C404.83 261.22 411.63 262.15 417.10 262.40 C422.57 262.65 426.72 262.23 431.90 261.40 C437.08 260.57 442.75 258.97 448.20 257.40 C453.65 255.83 458.85 254.25 464.60 252.00 C470.35 249.75 478.32 245.87 482.70 243.90 C487.08 241.93 488.17 241.43 490.90 240.20 C493.63 238.97 495.00 238.13 499.10 236.50 C503.20 234.87 510.03 231.98 515.50 230.40 C520.97 228.82 527.82 227.72 531.90 227.00 C535.98 226.28 537.32 226.30 540.00 226.10 C542.68 225.90 546.67 225.85 548.00 225.80" fill="none" stroke="#2c9a4c" stroke-width="0.6" opacity="0.7"/>
</svg>
<span class="t " style="left:223.40px;transform:translateX(-50%);top:293px;font-size:4.9px;line-height:7px;color:#e6e6e6;font-weight:700;">04:00</span>
<div class="b" style="left:223.15px;top:287.90px;width:0.50px;height:2.00px;background:#3a3a3a;border-radius:0px;"></div>
<span class="t " style="left:353.20px;transform:translateX(-50%);top:293px;font-size:4.9px;line-height:7px;color:#e6e6e6;font-weight:700;">05:00</span>
<div class="b" style="left:352.95px;top:287.90px;width:0.50px;height:2.00px;background:#3a3a3a;border-radius:0px;"></div>
<span class="t " style="left:483.10px;transform:translateX(-50%);top:293px;font-size:4.9px;line-height:7px;color:#e6e6e6;font-weight:700;">06:00</span>
<div class="b" style="left:482.85px;top:287.90px;width:0.50px;height:2.00px;background:#3a3a3a;border-radius:0px;"></div>
<span class="t " style="left:307.00px;top:302px;font-size:5.6px;line-height:8px;color:#e0e0e0;letter-spacing:-0.005px;">Design</span>
<span class="t " style="left:333.60px;top:302px;font-size:5.6px;line-height:8px;color:#e0e0e0;letter-spacing:0.018px;">Development</span>
<span class="t " style="left:578.60px;top:133px;font-size:6.8px;line-height:9px;color:#f2f2f2;font-weight:700;transform-origin:0 50%;transform:scaleX(0.9442);">Upcoming Live Sessions</span>
<span class="t " style="left:747.80px;top:133px;font-size:5.8px;line-height:8px;color:#dadada;letter-spacing:-0.099px;">Read More</span>
<svg style="left:776.8px;top:134.8px" width="6" height="4.8" viewBox="0 0 5 4" fill="none" stroke="#dadada" stroke-width="0.45"><path d="M0.2 2 H4.6 M3.2 0.6 L4.6 2 L3.2 3.4"/></svg>
<span class="t " style="left:578.60px;top:157px;font-size:8px;line-height:11px;color:#f4f4f4;font-weight:700;letter-spacing:-0.048px;">Mastering Web Development</span>
<div class="b" style="left:767.00px;top:159.00px;width:15.40px;height:8.00px;background:#3a1216;border-radius:1.5px;"></div>
<span class="t " style="left:774.70px;transform:translateX(-50%);top:160px;font-size:4.6px;line-height:7px;color:#e8364a;font-weight:700;">Live</span>
<span class="t " style="left:578.60px;top:171px;font-size:6.2px;line-height:9px;color:#b4b4b4;letter-spacing:0.004px;">Explore the latest advancements in frontend and backend development.</span>
<span class="t " style="left:578.60px;top:179px;font-size:6.2px;line-height:9px;color:#b4b4b4;letter-spacing:0.028px;">Learn how to build dynamic and frameworks.</span>
<div class="b" style="left:579.00px;top:206.00px;width:18.00px;height:18.00px;background:#23262b;border-radius:2px;"></div>
<svg style="left:583.4px;top:210.4px" width="9.2" height="9.2" viewBox="0 0 8 8" fill="none" stroke="#c8ccd2" stroke-width="0.6" stroke-linecap="round" stroke-linejoin="round"><rect x="1" y="1.6" width="6" height="5.6" rx="0.7"/><path d="M1 3.2 H7 M2.6 0.8 V2 M5.4 0.8 V2"/></svg>
<span class="t " style="left:603.50px;top:205px;font-size:6.7px;line-height:9px;color:#f2f2f2;font-weight:700;letter-spacing:-0.005px;">20 Mar 24</span>
<span class="t " style="left:603.50px;top:215px;font-size:6.2px;line-height:9px;color:#d0d0d0;transform-origin:0 50%;transform:scaleX(0.9163);">Date</span>
<div class="b" style="left:579.00px;top:237.60px;width:18.00px;height:18.00px;background:#23262b;border-radius:2px;"></div>
<svg style="left:583.4px;top:242.0px" width="9.2" height="9.2" viewBox="0 0 8 8" fill="none" stroke="#c8ccd2" stroke-width="0.6" stroke-linecap="round" stroke-linejoin="round"><circle cx="4" cy="4" r="3"/><path d="M4 2.2 V4 L5.2 4.8"/></svg>
<span class="t " style="left:603.50px;top:237px;font-size:6.7px;line-height:9px;color:#f2f2f2;font-weight:700;letter-spacing:-0.013px;">60 Minutes</span>
<span class="t " style="left:603.50px;top:247px;font-size:6.2px;line-height:9px;color:#d0d0d0;letter-spacing:-0.045px;">Session Duration</span>
<div class="b" style="left:579.00px;top:269.40px;width:18.00px;height:18.00px;background:#23262b;border-radius:2px;"></div>
<svg style="left:583.4px;top:273.79999999999995px" width="9.2" height="9.2" viewBox="0 0 8 8" fill="none" stroke="#c8ccd2" stroke-width="0.6" stroke-linecap="round" stroke-linejoin="round"><circle cx="2.8" cy="3" r="1.2"/><circle cx="5.6" cy="3" r="1.2"/><path d="M0.8 6.6 C0.8 4.8 4.6 4.8 4.6 6.6 Z M4.2 5 C5.4 4.6 7.4 5 7.4 6.6 H5.4"/></svg>
<span class="t " style="left:603.50px;top:269px;font-size:6.7px;line-height:9px;color:#f2f2f2;font-weight:700;letter-spacing:-0.128px;">John Doe</span>
<span class="t " style="left:603.50px;top:278px;font-size:6.2px;line-height:9px;color:#d0d0d0;letter-spacing:0.066px;">Instructor</span>
<div class="b" style="left:578.60px;top:301.40px;width:58.00px;height:16.00px;background:#f37433;border-radius:2px;box-shadow:0 0 3.5px rgba(243,116,51,.4);"></div>
<span class="t " style="left:607.60px;top:305px;font-size:6.4px;line-height:9px;color:#fff6f0;transform-origin:50% 50%;transform:translateX(-50%) scaleX(0.96);">Join the Session</span>
<span class="t " style="left:117.60px;top:344px;font-size:6.6px;line-height:9px;color:#f2f2f2;font-weight:700;letter-spacing:-0.116px;">All Courses</span>
<span class="t " style="left:469.60px;top:344px;font-size:5.8px;line-height:8px;color:#dadada;letter-spacing:-0.065px;">See All</span>
<svg style="left:488.6px;top:345.8px" width="6" height="4.8" viewBox="0 0 5 4" fill="none" stroke="#dadada" stroke-width="0.45"><path d="M0.2 2 H4.6 M3.2 0.6 L4.6 2 L3.2 3.4"/></svg>
<span class="t " style="left:119.40px;top:367px;font-size:6.5px;line-height:9px;color:#f4f4f4;font-weight:700;transform-origin:0 50%;transform:scaleX(0.93);">#</span>
<span class="t " style="left:141.60px;top:367px;font-size:6.5px;line-height:9px;color:#f4f4f4;font-weight:700;transform-origin:0 50%;transform:scaleX(0.93);">Course Name</span>
<span class="t " style="left:239.60px;top:367px;font-size:6.5px;line-height:9px;color:#f4f4f4;font-weight:700;transform-origin:0 50%;transform:scaleX(0.93);">Category</span>
<span class="t " style="left:309.00px;top:367px;font-size:6.5px;line-height:9px;color:#f4f4f4;font-weight:700;transform-origin:0 50%;transform:scaleX(0.93);">Duration</span>
<span class="t " style="left:365.60px;top:367px;font-size:6.5px;line-height:9px;color:#f4f4f4;font-weight:700;transform-origin:0 50%;transform:scaleX(0.93);">Price</span>
<span class="t " style="left:405.00px;top:367px;font-size:6.5px;line-height:9px;color:#f4f4f4;font-weight:700;transform-origin:0 50%;transform:scaleX(0.93);">Status</span>
<span class="t " style="left:458.00px;top:367px;font-size:6.5px;line-height:9px;color:#f4f4f4;font-weight:700;transform-origin:0 50%;transform:scaleX(0.93);">Action</span>
<span class="t " style="left:119.40px;top:388px;font-size:6.5px;line-height:9px;color:#e6e6e6;transform-origin:0 50%;transform:scaleX(0.95);">1</span>
<span class="t " style="left:141.60px;top:388px;font-size:6.5px;line-height:9px;color:#e6e6e6;transform-origin:0 50%;transform:scaleX(0.95);">Web Development</span>
<span class="t " style="left:239.60px;top:388px;font-size:6.5px;line-height:9px;color:#e6e6e6;transform-origin:0 50%;transform:scaleX(0.95);">Programming</span>
<span class="t " style="left:309.00px;top:388px;font-size:6.5px;line-height:9px;color:#e6e6e6;transform-origin:0 50%;transform:scaleX(0.95);">6 Months</span>
<span class="t " style="left:365.60px;top:388px;font-size:6.5px;line-height:9px;color:#e6e6e6;transform-origin:0 50%;transform:scaleX(0.95);">$499</span>
<span class="t " style="left:418.20px;transform:translateX(-50%);top:389px;font-size:4.2px;line-height:7px;color:#25c244;font-weight:700;">Available</span>
<svg style="left:459.9px;top:389.30px" width="2" height="6.4" viewBox="0 0 2 6.4"><circle cx="0.85" cy="1.1" r="0.58" fill="#e2e8ee"/><circle cx="0.85" cy="3.1" r="0.58" fill="#e2e8ee"/><circle cx="0.85" cy="5.1" r="0.58" fill="#e2e8ee"/></svg>
<span class="t " style="left:119.40px;top:410px;font-size:6.5px;line-height:9px;color:#e6e6e6;transform-origin:0 50%;transform:scaleX(0.95);">2</span>
<span class="t " style="left:141.60px;top:410px;font-size:6.5px;line-height:9px;color:#e6e6e6;transform-origin:0 50%;transform:scaleX(0.95);">Graphic Design</span>
<span class="t " style="left:239.60px;top:410px;font-size:6.5px;line-height:9px;color:#e6e6e6;transform-origin:0 50%;transform:scaleX(0.95);">Design</span>
<span class="t " style="left:309.00px;top:410px;font-size:6.5px;line-height:9px;color:#e6e6e6;transform-origin:0 50%;transform:scaleX(0.95);">4 Months</span>
<span class="t " style="left:365.60px;top:410px;font-size:6.5px;line-height:9px;color:#e6e6e6;transform-origin:0 50%;transform:scaleX(0.95);">$299</span>
<span class="t " style="left:416.20px;transform:translateX(-50%);top:411px;font-size:4.2px;line-height:7px;color:#f5a524;font-weight:700;">Limited</span>
<svg style="left:459.9px;top:411.13px" width="2" height="6.4" viewBox="0 0 2 6.4"><circle cx="0.85" cy="1.1" r="0.58" fill="#e2e8ee"/><circle cx="0.85" cy="3.1" r="0.58" fill="#e2e8ee"/><circle cx="0.85" cy="5.1" r="0.58" fill="#e2e8ee"/></svg>
<span class="t " style="left:119.40px;top:431px;font-size:6.5px;line-height:9px;color:#e6e6e6;transform-origin:0 50%;transform:scaleX(0.95);">3</span>
<span class="t " style="left:141.60px;top:431px;font-size:6.5px;line-height:9px;color:#e6e6e6;transform-origin:0 50%;transform:scaleX(0.95);">Data Science</span>
<span class="t " style="left:239.60px;top:431px;font-size:6.5px;line-height:9px;color:#e6e6e6;transform-origin:0 50%;transform:scaleX(0.95);">Analytics</span>
<span class="t " style="left:309.00px;top:431px;font-size:6.5px;line-height:9px;color:#e6e6e6;transform-origin:0 50%;transform:scaleX(0.95);">8 Months</span>
<span class="t " style="left:365.60px;top:431px;font-size:6.5px;line-height:9px;color:#e6e6e6;transform-origin:0 50%;transform:scaleX(0.95);">$799</span>
<span class="t " style="left:418.20px;transform:translateX(-50%);top:433px;font-size:4.2px;line-height:7px;color:#25c244;font-weight:700;">Available</span>
<svg style="left:459.9px;top:432.96px" width="2" height="6.4" viewBox="0 0 2 6.4"><circle cx="0.85" cy="1.1" r="0.58" fill="#e2e8ee"/><circle cx="0.85" cy="3.1" r="0.58" fill="#e2e8ee"/><circle cx="0.85" cy="5.1" r="0.58" fill="#e2e8ee"/></svg>
<span class="t " style="left:119.40px;top:453px;font-size:6.5px;line-height:9px;color:#e6e6e6;transform-origin:0 50%;transform:scaleX(0.95);">4</span>
<span class="t " style="left:141.60px;top:453px;font-size:6.5px;line-height:9px;color:#e6e6e6;transform-origin:0 50%;transform:scaleX(0.95);">Digital Marketing</span>
<span class="t " style="left:239.60px;top:453px;font-size:6.5px;line-height:9px;color:#e6e6e6;transform-origin:0 50%;transform:scaleX(0.95);">Marketing</span>
<span class="t " style="left:309.00px;top:453px;font-size:6.5px;line-height:9px;color:#e6e6e6;transform-origin:0 50%;transform:scaleX(0.95);">3 Months</span>
<span class="t " style="left:365.60px;top:453px;font-size:6.5px;line-height:9px;color:#e6e6e6;transform-origin:0 50%;transform:scaleX(0.95);">$199</span>
<span class="t " style="left:412.10px;transform:translateX(-50%);top:455px;font-size:4.2px;line-height:7px;color:#e8364a;font-weight:700;">Full</span>
<svg style="left:459.9px;top:454.79px" width="2" height="6.4" viewBox="0 0 2 6.4"><circle cx="0.85" cy="1.1" r="0.58" fill="#e2e8ee"/><circle cx="0.85" cy="3.1" r="0.58" fill="#e2e8ee"/><circle cx="0.85" cy="5.1" r="0.58" fill="#e2e8ee"/></svg>
<span class="t " style="left:119.40px;top:475px;font-size:6.5px;line-height:9px;color:#e6e6e6;transform-origin:0 50%;transform:scaleX(0.95);">5</span>
<span class="t " style="left:141.60px;top:475px;font-size:6.5px;line-height:9px;color:#e6e6e6;transform-origin:0 50%;transform:scaleX(0.95);">Machine Learning</span>
<span class="t " style="left:239.60px;top:475px;font-size:6.5px;line-height:9px;color:#e6e6e6;transform-origin:0 50%;transform:scaleX(0.95);">AI</span>
<span class="t " style="left:309.00px;top:475px;font-size:6.5px;line-height:9px;color:#e6e6e6;transform-origin:0 50%;transform:scaleX(0.95);">9 Months</span>
<span class="t " style="left:365.60px;top:475px;font-size:6.5px;line-height:9px;color:#e6e6e6;transform-origin:0 50%;transform:scaleX(0.95);">$999</span>
<span class="t " style="left:418.20px;transform:translateX(-50%);top:477px;font-size:4.2px;line-height:7px;color:#25c244;font-weight:700;">Available</span>
<svg style="left:459.9px;top:476.62px" width="2" height="6.4" viewBox="0 0 2 6.4"><circle cx="0.85" cy="1.1" r="0.58" fill="#e2e8ee"/><circle cx="0.85" cy="3.1" r="0.58" fill="#e2e8ee"/><circle cx="0.85" cy="5.1" r="0.58" fill="#e2e8ee"/></svg>
<span class="t " style="left:119.40px;top:497px;font-size:6.5px;line-height:9px;color:#e6e6e6;transform-origin:0 50%;transform:scaleX(0.95);">6</span>
<span class="t " style="left:141.60px;top:497px;font-size:6.5px;line-height:9px;color:#e6e6e6;transform-origin:0 50%;transform:scaleX(0.95);">Cyber Security</span>
<span class="t " style="left:239.60px;top:497px;font-size:6.5px;line-height:9px;color:#e6e6e6;transform-origin:0 50%;transform:scaleX(0.95);">Security</span>
<span class="t " style="left:309.00px;top:497px;font-size:6.5px;line-height:9px;color:#e6e6e6;transform-origin:0 50%;transform:scaleX(0.95);">7 Months</span>
<span class="t " style="left:365.60px;top:497px;font-size:6.5px;line-height:9px;color:#e6e6e6;transform-origin:0 50%;transform:scaleX(0.95);">$699</span>
<span class="t " style="left:416.20px;transform:translateX(-50%);top:498px;font-size:4.2px;line-height:7px;color:#f5a524;font-weight:700;">Limited</span>
<svg style="left:459.9px;top:498.45px" width="2" height="6.4" viewBox="0 0 2 6.4"><circle cx="0.85" cy="1.1" r="0.58" fill="#e2e8ee"/><circle cx="0.85" cy="3.1" r="0.58" fill="#e2e8ee"/><circle cx="0.85" cy="5.1" r="0.58" fill="#e2e8ee"/></svg>
<span class="t " style="left:119.40px;top:519px;font-size:6.5px;line-height:9px;color:#e6e6e6;transform-origin:0 50%;transform:scaleX(0.95);">7</span>
<span class="t " style="left:141.60px;top:519px;font-size:6.5px;line-height:9px;color:#e6e6e6;transform-origin:0 50%;transform:scaleX(0.95);">Artificial Intelligence</span>
<span class="t " style="left:239.60px;top:519px;font-size:6.5px;line-height:9px;color:#e6e6e6;transform-origin:0 50%;transform:scaleX(0.95);">AI</span>
<span class="t " style="left:309.00px;top:519px;font-size:6.5px;line-height:9px;color:#e6e6e6;transform-origin:0 50%;transform:scaleX(0.95);">10 Months</span>
<span class="t " style="left:365.60px;top:519px;font-size:6.5px;line-height:9px;color:#e6e6e6;transform-origin:0 50%;transform:scaleX(0.95);">$1299</span>
<span class="t " style="left:418.20px;transform:translateX(-50%);top:520px;font-size:4.2px;line-height:7px;color:#25c244;font-weight:700;">Available</span>
<svg style="left:459.9px;top:520.28px" width="2" height="6.4" viewBox="0 0 2 6.4"><circle cx="0.85" cy="1.1" r="0.58" fill="#e2e8ee"/><circle cx="0.85" cy="3.1" r="0.58" fill="#e2e8ee"/><circle cx="0.85" cy="5.1" r="0.58" fill="#e2e8ee"/></svg>
<span class="t " style="left:520.80px;top:343px;font-size:6.6px;line-height:9px;color:#f2f2f2;font-weight:700;letter-spacing:-0.008px;">Course Schedule</span>
<svg style="left:778.9px;top:344.5px" width="2" height="6.4" viewBox="0 0 2 6.4"><circle cx="0.85" cy="1.1" r="0.58" fill="#e2e8ee"/><circle cx="0.85" cy="3.1" r="0.58" fill="#e2e8ee"/><circle cx="0.85" cy="5.1" r="0.58" fill="#e2e8ee"/></svg>
<div class="b" style="left:539.60px;top:505.40px;width:239.00px;height:0.60px;background:#3a3a3a;border-radius:0px;"></div>
<span class="t " style="right:264.00px;top:503px;font-size:4.6px;line-height:7px;color:#e6e6e6;font-weight:700;">0</span>
<div class="b" style="left:539.60px;top:484.60px;width:239.00px;height:0.60px;background:#2b2b2b;border-radius:0px;"></div>
<span class="t " style="right:264.00px;top:482px;font-size:4.6px;line-height:7px;color:#e6e6e6;font-weight:700;">20</span>
<div class="b" style="left:539.60px;top:463.80px;width:239.00px;height:0.60px;background:#2b2b2b;border-radius:0px;"></div>
<span class="t " style="right:264.00px;top:461px;font-size:4.6px;line-height:7px;color:#e6e6e6;font-weight:700;">40</span>
<div class="b" style="left:539.60px;top:443.00px;width:239.00px;height:0.60px;background:#2b2b2b;border-radius:0px;"></div>
<span class="t " style="right:264.00px;top:440px;font-size:4.6px;line-height:7px;color:#e6e6e6;font-weight:700;">60</span>
<div class="b" style="left:539.60px;top:422.20px;width:239.00px;height:0.60px;background:#2b2b2b;border-radius:0px;"></div>
<span class="t " style="right:264.00px;top:419px;font-size:4.6px;line-height:7px;color:#e6e6e6;font-weight:700;">80</span>
<div class="b" style="left:539.60px;top:401.40px;width:239.00px;height:0.60px;background:#2b2b2b;border-radius:0px;"></div>
<span class="t " style="right:264.00px;top:399px;font-size:4.6px;line-height:7px;color:#e6e6e6;font-weight:700;">100</span>
<div class="b" style="left:539.60px;top:380.60px;width:239.00px;height:0.60px;background:#2b2b2b;border-radius:0px;"></div>
<span class="t " style="right:264.00px;top:378px;font-size:4.6px;line-height:7px;color:#e6e6e6;font-weight:700;">120</span>
<svg style="left:0;top:0" width="800" height="550" viewBox="0 0 800 550"><rect x="561.00" y="413.14" width="24.2" height="22.44" fill="#f46a6a"/><rect x="561.00" y="434.98" width="24.2" height="12.04" fill="#f1b44c"/><rect x="561.00" y="446.42" width="24.2" height="14.12" fill="#34c38f"/><rect x="561.00" y="459.94" width="24.2" height="45.76" fill="#556ee6"/><rect x="595.40" y="399.62" width="24.2" height="7.88" fill="#f46a6a"/><rect x="595.40" y="406.90" width="24.2" height="18.28" fill="#f1b44c"/><rect x="595.40" y="424.58" width="24.2" height="24.52" fill="#34c38f"/><rect x="595.40" y="448.50" width="24.2" height="57.20" fill="#556ee6"/><rect x="629.80" y="400.66" width="24.2" height="26.60" fill="#f46a6a"/><rect x="629.80" y="426.66" width="24.2" height="16.20" fill="#f1b44c"/><rect x="629.80" y="442.26" width="24.2" height="21.40" fill="#34c38f"/><rect x="629.80" y="463.06" width="24.2" height="42.64" fill="#556ee6"/><rect x="664.20" y="398.58" width="24.2" height="14.12" fill="#f46a6a"/><rect x="664.20" y="412.10" width="24.2" height="16.20" fill="#f1b44c"/><rect x="664.20" y="427.70" width="24.2" height="8.92" fill="#34c38f"/><rect x="664.20" y="436.02" width="24.2" height="69.68" fill="#556ee6"/><rect x="698.60" y="424.58" width="24.2" height="23.48" fill="#f46a6a"/><rect x="698.60" y="447.46" width="24.2" height="22.44" fill="#f1b44c"/><rect x="698.60" y="469.30" width="24.2" height="14.12" fill="#34c38f"/><rect x="698.60" y="482.82" width="24.2" height="22.88" fill="#556ee6"/><rect x="733.00" y="410.02" width="24.2" height="8.92" fill="#f46a6a"/><rect x="733.00" y="418.34" width="24.2" height="15.16" fill="#f1b44c"/><rect x="733.00" y="432.90" width="24.2" height="28.68" fill="#34c38f"/><rect x="733.00" y="460.98" width="24.2" height="44.72" fill="#556ee6"/></svg>
<span class="t " style="left:573.10px;transform:translateX(-50%);top:481px;font-size:4.8px;line-height:7px;color:#fff;">44</span>
<span class="t " style="left:573.10px;transform:translateX(-50%);top:451px;font-size:4.8px;line-height:7px;color:#fff;">13</span>
<span class="t " style="left:573.10px;transform:translateX(-50%);top:438px;font-size:4.8px;line-height:7px;color:#fff;">11</span>
<span class="t " style="left:573.10px;transform:translateX(-50%);top:422px;font-size:4.8px;line-height:7px;color:#fff;">21</span>
<span class="t " style="left:573.10px;transform:translateX(-50%);top:404px;font-size:6.3px;line-height:9px;color:#fff;font-weight:700;">89</span>
<span class="t " style="left:573.10px;transform:translateX(-50%);top:511px;font-size:4.7px;line-height:7px;color:#e6e6e6;font-weight:700;">Jan '11</span>
<div class="b" style="left:572.90px;top:506.00px;width:0.50px;height:1.60px;background:#3a3a3a;border-radius:0px;"></div>
<span class="t " style="left:607.50px;transform:translateX(-50%);top:475px;font-size:4.8px;line-height:7px;color:#fff;">55</span>
<span class="t " style="left:607.50px;transform:translateX(-50%);top:434px;font-size:4.8px;line-height:7px;color:#fff;">23</span>
<span class="t " style="left:607.50px;transform:translateX(-50%);top:413px;font-size:4.8px;line-height:7px;color:#fff;">17</span>
<span class="t " style="left:607.50px;transform:translateX(-50%);top:401px;font-size:4.8px;line-height:7px;color:#fff;">7</span>
<span class="t " style="left:607.50px;transform:translateX(-50%);top:391px;font-size:6.3px;line-height:9px;color:#fff;font-weight:700;">102</span>
<span class="t " style="left:607.50px;transform:translateX(-50%);top:511px;font-size:4.7px;line-height:7px;color:#e6e6e6;font-weight:700;">02 Jan</span>
<div class="b" style="left:607.30px;top:506.00px;width:0.50px;height:1.60px;background:#3a3a3a;border-radius:0px;"></div>
<span class="t " style="left:641.90px;transform:translateX(-50%);top:482px;font-size:4.8px;line-height:7px;color:#fff;">41</span>
<span class="t " style="left:641.90px;transform:translateX(-50%);top:450px;font-size:4.8px;line-height:7px;color:#fff;">20</span>
<span class="t " style="left:641.90px;transform:translateX(-50%);top:432px;font-size:4.8px;line-height:7px;color:#fff;">15</span>
<span class="t " style="left:641.90px;transform:translateX(-50%);top:411px;font-size:4.8px;line-height:7px;color:#fff;">25</span>
<span class="t " style="left:641.90px;transform:translateX(-50%);top:392px;font-size:6.3px;line-height:9px;color:#fff;font-weight:700;">101</span>
<span class="t " style="left:641.90px;transform:translateX(-50%);top:511px;font-size:4.7px;line-height:7px;color:#e6e6e6;font-weight:700;">03 Jan</span>
<div class="b" style="left:641.70px;top:506.00px;width:0.50px;height:1.60px;background:#3a3a3a;border-radius:0px;"></div>
<span class="t " style="left:676.30px;transform:translateX(-50%);top:469px;font-size:4.8px;line-height:7px;color:#fff;">67</span>
<span class="t " style="left:676.30px;transform:translateX(-50%);top:430px;font-size:4.8px;line-height:7px;color:#fff;">8</span>
<span class="t " style="left:676.30px;transform:translateX(-50%);top:418px;font-size:4.8px;line-height:7px;color:#fff;">15</span>
<span class="t " style="left:676.30px;transform:translateX(-50%);top:403px;font-size:4.8px;line-height:7px;color:#fff;">13</span>
<span class="t " style="left:676.30px;transform:translateX(-50%);top:390px;font-size:6.3px;line-height:9px;color:#fff;font-weight:700;">103</span>
<span class="t " style="left:676.30px;transform:translateX(-50%);top:511px;font-size:4.7px;line-height:7px;color:#e6e6e6;font-weight:700;">04 Jan</span>
<div class="b" style="left:676.10px;top:506.00px;width:0.50px;height:1.60px;background:#3a3a3a;border-radius:0px;"></div>
<span class="t " style="left:710.70px;transform:translateX(-50%);top:492px;font-size:4.8px;line-height:7px;color:#fff;">22</span>
<span class="t " style="left:710.70px;transform:translateX(-50%);top:474px;font-size:4.8px;line-height:7px;color:#fff;">13</span>
<span class="t " style="left:710.70px;transform:translateX(-50%);top:456px;font-size:4.8px;line-height:7px;color:#fff;">21</span>
<span class="t " style="left:710.70px;transform:translateX(-50%);top:434px;font-size:4.8px;line-height:7px;color:#fff;">22</span>
<span class="t " style="left:710.70px;transform:translateX(-50%);top:416px;font-size:6.3px;line-height:9px;color:#fff;font-weight:700;">78</span>
<span class="t " style="left:710.70px;transform:translateX(-50%);top:511px;font-size:4.7px;line-height:7px;color:#e6e6e6;font-weight:700;">05 Jan</span>
<div class="b" style="left:710.50px;top:506.00px;width:0.50px;height:1.60px;background:#3a3a3a;border-radius:0px;"></div>
<span class="t " style="left:745.10px;transform:translateX(-50%);top:481px;font-size:4.8px;line-height:7px;color:#fff;">43</span>
<span class="t " style="left:745.10px;transform:translateX(-50%);top:445px;font-size:4.8px;line-height:7px;color:#fff;">27</span>
<span class="t " style="left:745.10px;transform:translateX(-50%);top:423px;font-size:4.8px;line-height:7px;color:#fff;">14</span>
<span class="t " style="left:745.10px;transform:translateX(-50%);top:412px;font-size:4.8px;line-height:7px;color:#fff;">8</span>
<span class="t " style="left:745.10px;transform:translateX(-50%);top:401px;font-size:6.3px;line-height:9px;color:#fff;font-weight:700;">92</span>
<span class="t " style="left:745.10px;transform:translateX(-50%);top:511px;font-size:4.7px;line-height:7px;color:#e6e6e6;font-weight:700;">06 Jan</span>
<div class="b" style="left:744.90px;top:506.00px;width:0.50px;height:1.60px;background:#3a3a3a;border-radius:0px;"></div>
<svg style="left:700px;top:195px;filter:blur(0.3px)" width="100" height="135" viewBox="700 195 100 135">
<defs>
<linearGradient id="gownL" x1="0" y1="0" x2="1" y2="0"><stop offset="0" stop-color="#505a7c"/><stop offset="1" stop-color="#3b4466"/></linearGradient>
<linearGradient id="gownR" x1="0" y1="0" x2="1" y2="0"><stop offset="0" stop-color="#1a2240"/><stop offset="1" stop-color="#222b4c"/></linearGradient>
<linearGradient id="cap" x1="0" y1="0" x2="1" y2="1"><stop offset="0" stop-color="#26325a"/><stop offset="1" stop-color="#151c36"/></linearGradient>
<linearGradient id="dome" x1="0" y1="0" x2="1" y2="0"><stop offset="0" stop-color="#3c4870"/><stop offset=".6" stop-color="#2a3558"/><stop offset="1" stop-color="#1d2645"/></linearGradient>
<radialGradient id="face" cx=".42" cy=".45" r=".75"><stop offset="0" stop-color="#fbdcc6"/><stop offset="1" stop-color="#e6b596"/></radialGradient>
<linearGradient id="book" x1="0" y1="0" x2="1" y2="1"><stop offset="0" stop-color="#d84552"/><stop offset="1" stop-color="#bb2a38"/></linearGradient>
</defs>
<!-- shoes -->
<path d="M730.8 312 C731 309.2 736 307.6 741 307.8 L746.2 308.6 C746.8 311 746.4 313.2 745.6 313.8 L733 314.2 C731.2 314 730.6 313.2 730.8 312 Z" fill="#27272b"/>
<path d="M752.4 309 L758.8 308.6 C760.4 310 761 313 760.6 314.6 C759 315.8 755 315.8 753 315 C752 313.4 752 311 752.4 309 Z" fill="#27272b"/>
<!-- legs -->
<path d="M738.6 294 L745.9 294 L745.6 308.4 L739 308.4 Z" fill="#3173ba"/>
<path d="M751.4 294 L758.8 294 L758.6 309 L752 309 Z" fill="#2a68ac"/>
<!-- right bell sleeve (behind body) -->
<path d="M757.5 250 C763 250.4 767.4 254 769.6 262 C770.6 268 769 274.6 765.6 278.4 L759.4 273 C758.4 266 757.6 258 757.5 250 Z" fill="#283258"/>
<!-- gown body -->
<path d="M738.2 249.4 C735.2 262 734.2 282 734.4 295.4 C739 296.4 742.4 296.6 745.8 296.4 L746.6 249.4 Z" fill="url(#gownL)"/>
<path d="M746 249.4 L745.6 296.4 C752 296.8 758.6 296.4 763.8 295.2 C764 280 762.4 262 759.2 249.4 Z" fill="url(#gownR)"/>
<!-- left upper arm -->
<path d="M738.6 249 C734.4 251.6 732 258 731.4 264 L737.4 265 Z" fill="#465078"/>
<!-- neck + collar -->
<path d="M744.6 241 L751.6 241 L751.8 247.4 L748.2 250 L744.4 247.4 Z" fill="#ecc0a2"/>
<path d="M743.2 246 C745.6 247.6 750.6 247.6 753 245.8 L752.4 250.4 L748.2 252.8 L743.8 250.4 Z" fill="#3a7fc4"/>
<!-- white hood -->
<path d="M737 247.4 C739.6 246 742.6 246.4 744.2 247.8 L748.2 252.2 L752.2 247.8 C754.2 246.4 758.2 245.8 761.2 247.6 L758 255.2 C754 258.4 743.6 258.4 740.4 255.4 Z" fill="#eeeeF1"/>
<!-- book -->
<path d="M727.7 257.9 L755.2 258.2 L754.6 272.4 L752.4 273.4 L727.9 271.6 Z" fill="url(#book)"/>
<!-- hands -->
<path d="M726.2 271 C726.6 269.6 729 269.4 731.6 270.4 C734 271.4 734.8 273.2 734.2 274.6 C732.4 275.8 729.4 275.6 727.6 274.4 C726.4 273.6 726 272.2 726.2 271 Z" fill="#f1c7aa"/>
<path d="M747 272.2 C748.6 270 752.6 269 756.4 269.2 C759 269.6 760 271.4 759.2 273.2 C757.6 275.2 752.4 276 749.4 275.2 C747.6 274.6 746.8 273.4 747 272.2 Z" fill="#f1c7aa"/>
<!-- ears -->
<ellipse cx="736.9" cy="235" rx="1.6" ry="2.4" fill="#ebbd9f"/>
<ellipse cx="760.6" cy="235" rx="1.6" ry="2.4" fill="#e4b293"/>
<!-- head -->
<path d="M736.8 233 C736.4 226 741 222.6 748.6 222.6 C756.4 222.6 761 226 760.6 233 C760.4 239.6 755.6 244.8 748.6 244.8 C741.8 244.8 737 239.6 736.8 233 Z" fill="url(#face)"/>
<!-- hair -->
<path d="M736.9 231.4 C736.2 225 739 220.6 748.4 220.6 C757 220.6 761.4 225 760.9 233.6 C759.9 231 759 229.6 757.6 228.8 C752.6 229.6 744 228.6 740.4 226.6 C738.6 227.6 737.5 229.2 736.9 231.4 Z" fill="#3a2b2b"/>
<!-- eyes, brows, smile -->
<ellipse cx="742.3" cy="232.3" rx="1.35" ry="2" fill="#1e1a1e"/>
<ellipse cx="752.2" cy="232.3" rx="1.35" ry="2" fill="#1e1a1e"/>
<path d="M739.6 228.4 C740.8 227.6 742.6 227.6 743.6 228.2 M750.6 228 C751.8 227.4 753.6 227.4 754.8 228.2" stroke="#3a2a2a" stroke-width="0.7" fill="none" stroke-linecap="round"/>
<path d="M743.4 239 C745.4 240.8 749.6 240.8 751.6 238.8" stroke="#b05e50" stroke-width="0.8" fill="none" stroke-linecap="round"/>
<ellipse cx="747.6" cy="236.2" rx="0.9" ry="0.7" fill="#e8b094"/>
<!-- mortarboard -->
<path d="M727.2 220 L740 207 L774.6 214.1 L761.4 226.4 Z" fill="url(#cap)"/>
<!-- cap dome (in front) -->
<path d="M737.4 216.4 C742 212.6 755 213.4 761.6 218.6 C761.9 221.4 761.7 224.4 761.2 227 C754.6 223.6 744 221.8 737.2 222 C736.8 220.2 737 218 737.4 216.4 Z" fill="url(#dome)"/>
<!-- tassel -->
<path d="M742 212.4 C735.6 214.6 730.6 217 729.8 218.8 L730.4 223.4" stroke="#c98812" stroke-width="0.6" fill="none"/>
<path d="M729.4 222.8 L731.6 222.8 L733.2 233.2 L726.8 232.8 Z" fill="#f0a010"/>
<path d="M729.2 224.4 L731.9 224.4" stroke="#c27808" stroke-width="0.6"/>
</svg>
<svg style="left:0;top:0;pointer-events:none" width="800" height="550" viewBox="0 0 800 550"><rect x="747.80" y="139.70" width="27.60" height="0.55" fill="rgba(218,218,218,.75)"/><rect x="570.00" y="149.90" width="221.00" height="0.5" fill="#303030"/><rect x="469.60" y="350.70" width="17.40" height="0.55" fill="rgba(218,218,218,.75)"/><rect x="109.00" y="360.00" width="393.50" height="0.5" fill="#303030"/><rect x="109.00" y="381.20" width="393.50" height="0.5" fill="#343434"/><rect x="109.00" y="403.10" width="393.50" height="0.5" fill="#303030"/><rect x="109.00" y="424.60" width="393.50" height="0.5" fill="#303030"/><rect x="109.00" y="446.50" width="393.50" height="0.5" fill="#303030"/><rect x="109.00" y="468.40" width="393.50" height="0.5" fill="#303030"/><rect x="109.00" y="490.20" width="393.50" height="0.5" fill="#303030"/><rect x="109.00" y="512.10" width="393.50" height="0.5" fill="#303030"/><rect x="513.00" y="360.00" width="278.00" height="0.5" fill="#303030"/></svg>
</body></html>
